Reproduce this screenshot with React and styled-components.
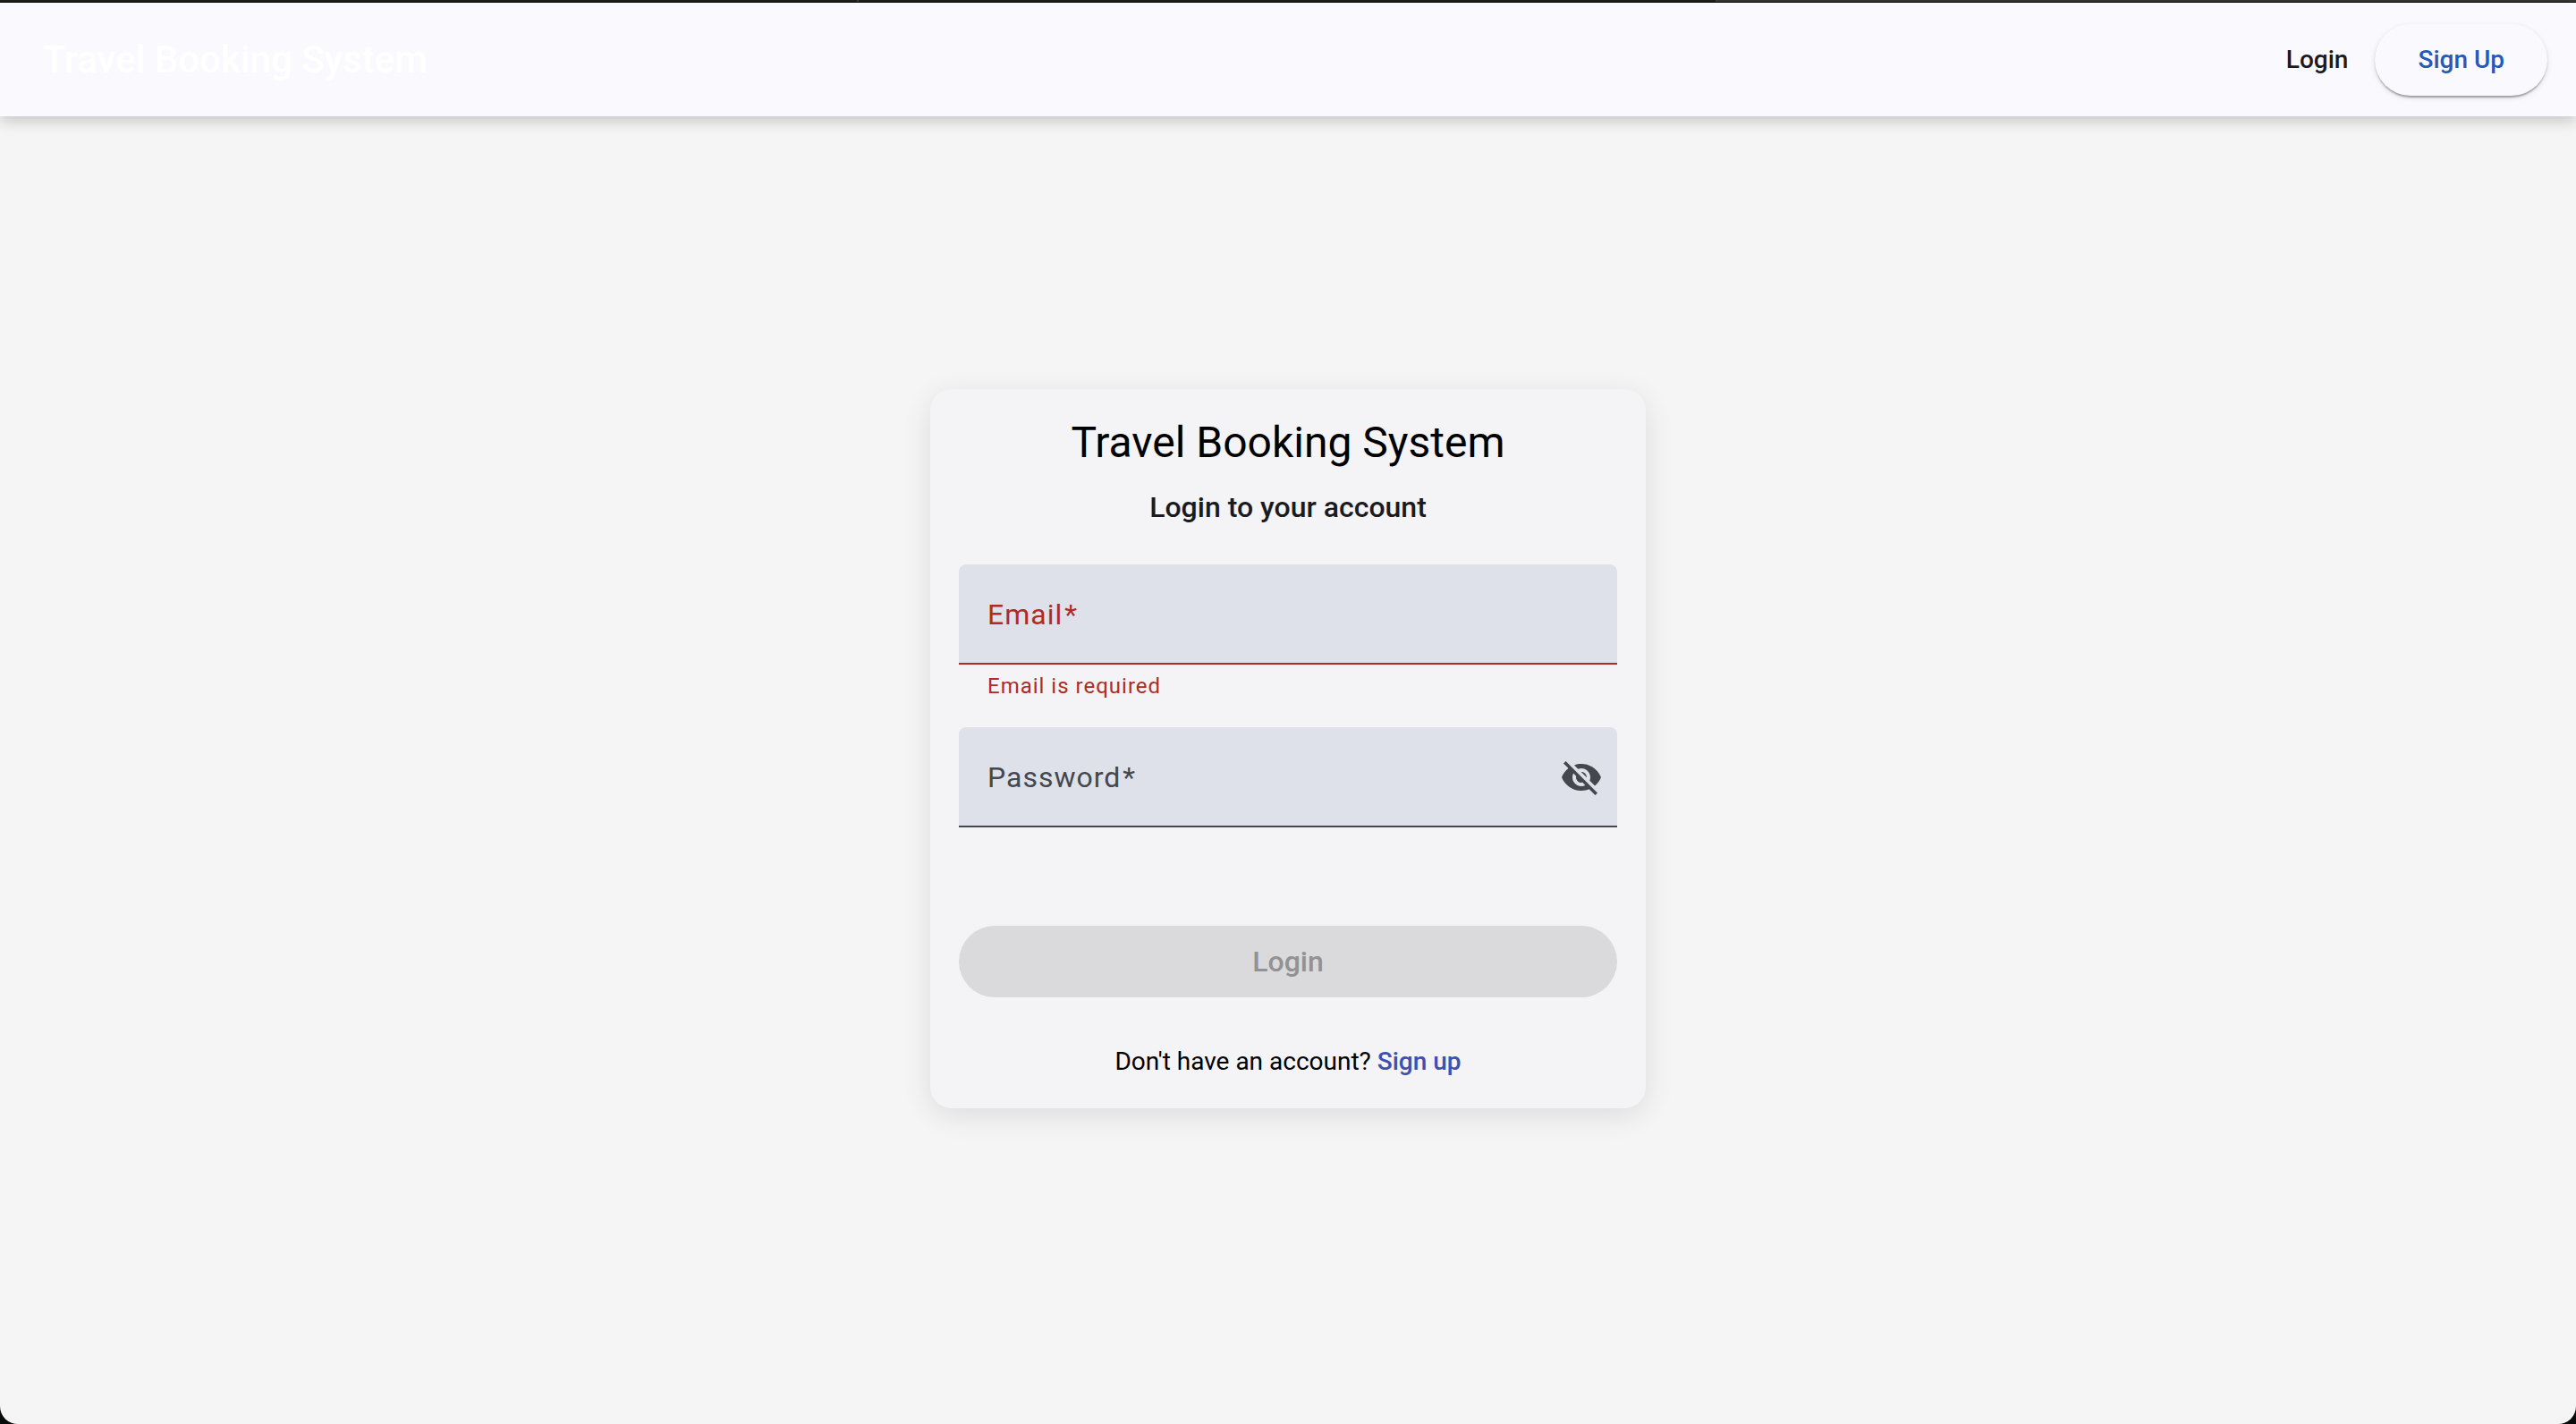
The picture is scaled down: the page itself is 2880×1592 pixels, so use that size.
import React, { useState } from "react";
import styled, { createGlobalStyle } from "styled-components";

const GlobalStyle = createGlobalStyle`
  *, *::before, *::after { box-sizing: border-box; }
  html, body { margin: 0; background: #070b0a; }
  body {
    font-family: Roboto, "Open Sans", sans-serif;
    color: #000;
  }
  a { text-decoration: none; }
`;

const Window = styled.div`
  min-height: 100vh;
  display: flex;
  flex-direction: column;
  background: #f5f5f5;
  border-radius: 0 0 20px 20px;
  overflow: hidden;
`;

const TabStrip = styled.div`
  display: grid;
  grid-template-columns: 1fr 1fr 1fr;
  height: 3px;
  background: #000;
  border-bottom: 1px solid #000;
`;

const TabEdge = styled.div`
  background: ${(p) => (p.$active ? "#373733" : "#20201b")};
  border-right: ${(p) => (p.$active ? "0" : "2px solid #3e3e3c")};
`;

const Toolbar = styled.header`
  position: relative;
  display: flex;
  align-items: center;
  justify-content: space-between;
  height: 127px;
  padding: 0 32px 0 48px;
  background: #faf9fe;
  box-shadow: 0 4px 16px rgba(0, 0, 0, 0.22);
`;

const Brand = styled.a`
  color: #fff;
  font-size: 42px;
  line-height: 56px;
  font-weight: 500;
`;

const Nav = styled.nav`
  display: flex;
  align-items: center;
  gap: 6px;
`;

const NavButton = styled.button`
  height: 80px;
  padding: 0 ${(p) => (p.$raised ? 48 : 24)}px;
  border: 0;
  border-radius: 40px;
  background: ${(p) => (p.$raised ? "#faf9fe" : "transparent")};
  box-shadow: ${(p) =>
    p.$raised
      ? "0 4px 2px -2px rgba(0, 0, 0, 0.2), 0 2px 2px rgba(0, 0, 0, 0.14), 0 2px 6px rgba(0, 0, 0, 0.12)"
      : "none"};
  color: ${(p) => (p.$raised ? "#255bb8" : "#1b1b1f")};
  font: 500 28px/40px Roboto, sans-serif;
  cursor: pointer;
`;

const Main = styled.main`
  flex: 1;
  display: flex;
  align-items: center;
  justify-content: center;
  padding: 0 32px 48px;
`;

const Card = styled.section`
  width: 100%;
  max-width: 800px;
  padding: 32px;
  border-radius: 24px;
  background: #f4f3f6;
  box-shadow: 0 8px 32px rgba(0, 0, 0, 0.1);
`;

const CardHeader = styled.div`
  text-align: center;
  margin-bottom: 40px;
`;

const Title = styled.h1`
  margin: 0 0 20px;
  font-size: 48px;
  line-height: 56px;
  font-weight: 400;
`;

const Subtitle = styled.h2`
  margin: 0;
  color: #1b1b1f;
  font-size: 32px;
  line-height: 48px;
  font-weight: 500;
`;

const Field = styled.div`
  display: grid;
  grid-template-columns: 1fr auto;
  align-items: center;
  height: 112px;
  padding: 2px 0 0 32px;
  border-bottom: 2px solid ${(p) => (p.$invalid ? "#b02b25" : "#45474e")};
  border-radius: 8px 8px 0 0;
  background: #dfe1ea;
  color: ${(p) => (p.$invalid ? "#b02b25" : "#45474e")};
`;

const FieldLabel = styled.label`
  grid-area: 1 / 1;
  font-size: 32px;
  line-height: 48px;
  letter-spacing: 1px;
`;

const RequiredMark = styled.span`
  margin-left: 2px;
`;

const FieldInput = styled.input`
  grid-area: 1 / 1;
  width: 100%;
  height: 48px;
  padding: 0;
  border: 0;
  outline: 0;
  background: transparent;
  font: 400 32px/48px Roboto, sans-serif;
`;

const IconButton = styled.button`
  display: grid;
  place-items: center;
  width: 80px;
  height: 80px;
  padding: 0;
  border: 0;
  background: transparent;
  color: inherit;
  cursor: pointer;
`;

const Hint = styled.p`
  height: 70px;
  margin: 0;
  padding: 8px 32px;
  color: #b02b25;
  font-size: 24px;
  line-height: 32px;
  letter-spacing: 1px;
`;

const Submit = styled.button`
  display: block;
  width: 100%;
  height: 80px;
  margin-top: 40px;
  border: 0;
  border-radius: 40px;
  background: #dadadc;
  color: #929294;
  font: 500 32px/40px Roboto, sans-serif;
`;

const Footer = styled.p`
  margin: 52px 0 0;
  text-align: center;
  font-size: 28px;
  line-height: 40px;
`;

const SignUpLink = styled.a`
  color: #4050b0;
  font-weight: 500;
`;

function EyeOffIcon() {
  return (
    <svg width="48" height="48" viewBox="0 0 24 24" fill="currentColor" aria-hidden="true">
      <path d="M12 7c2.76 0 5 2.24 5 5 0 .65-.13 1.26-.36 1.83l2.92 2.92c1.51-1.26 2.7-2.89 3.43-4.75-1.73-4.39-6-7.5-11-7.5-1.4 0-2.74.25-3.98.7l2.16 2.16C10.74 7.13 11.35 7 12 7zM2 4.27l2.28 2.28.46.46C3.08 8.3 1.78 10.02 1 12c1.73 4.39 6 7.5 11 7.5 1.55 0 3.03-.3 4.38-.84l.42.42L19.73 22 21 20.73 3.27 3 2 4.27zM7.53 9.8l1.55 1.55c-.05.21-.08.43-.08.65 0 1.66 1.34 3 3 3 .22 0 .44-.03.65-.08l1.55 1.55c-.67.33-1.41.53-2.2.53-2.76 0-5-2.24-5-5 0-.79.2-1.53.53-2.2zm4.31-.78l3.15 3.15.02-.16c0-1.66-1.34-3-3-3l-.17.01z" />
    </svg>
  );
}

export default function App() {
  const [visible, setVisible] = useState(false);
  return (
    <>
      <GlobalStyle />
      <Window>
        <TabStrip>
          <TabEdge />
          <TabEdge />
          <TabEdge $active />
        </TabStrip>
        <Toolbar>
          <Brand href="#home">Travel Booking System</Brand>
          <Nav>
            <NavButton type="button">Login</NavButton>
            <NavButton type="button" $raised>Sign Up</NavButton>
          </Nav>
        </Toolbar>
        <Main>
          <Card>
            <CardHeader>
              <Title>Travel Booking System</Title>
              <Subtitle>Login to your account</Subtitle>
            </CardHeader>
            <form noValidate>
              <Field $invalid>
                <FieldLabel htmlFor="email">
                  Email<RequiredMark>*</RequiredMark>
                </FieldLabel>
                <FieldInput id="email" type="email" required aria-invalid="true" aria-describedby="email-error" />
              </Field>
              <Hint id="email-error">Email is required</Hint>
              <Field>
                <FieldLabel htmlFor="password">
                  Password<RequiredMark>*</RequiredMark>
                </FieldLabel>
                <FieldInput id="password" type={visible ? "text" : "password"} required />
                <IconButton type="button" aria-label="Toggle password visibility" onClick={() => setVisible(!visible)}>
                  <EyeOffIcon />
                </IconButton>
              </Field>
              <Hint />
              <Submit type="submit" disabled>Login</Submit>
            </form>
            <Footer>
              Don't have an account? <SignUpLink href="#signup">Sign up</SignUpLink>
            </Footer>
          </Card>
        </Main>
      </Window>
    </>
  );
}
